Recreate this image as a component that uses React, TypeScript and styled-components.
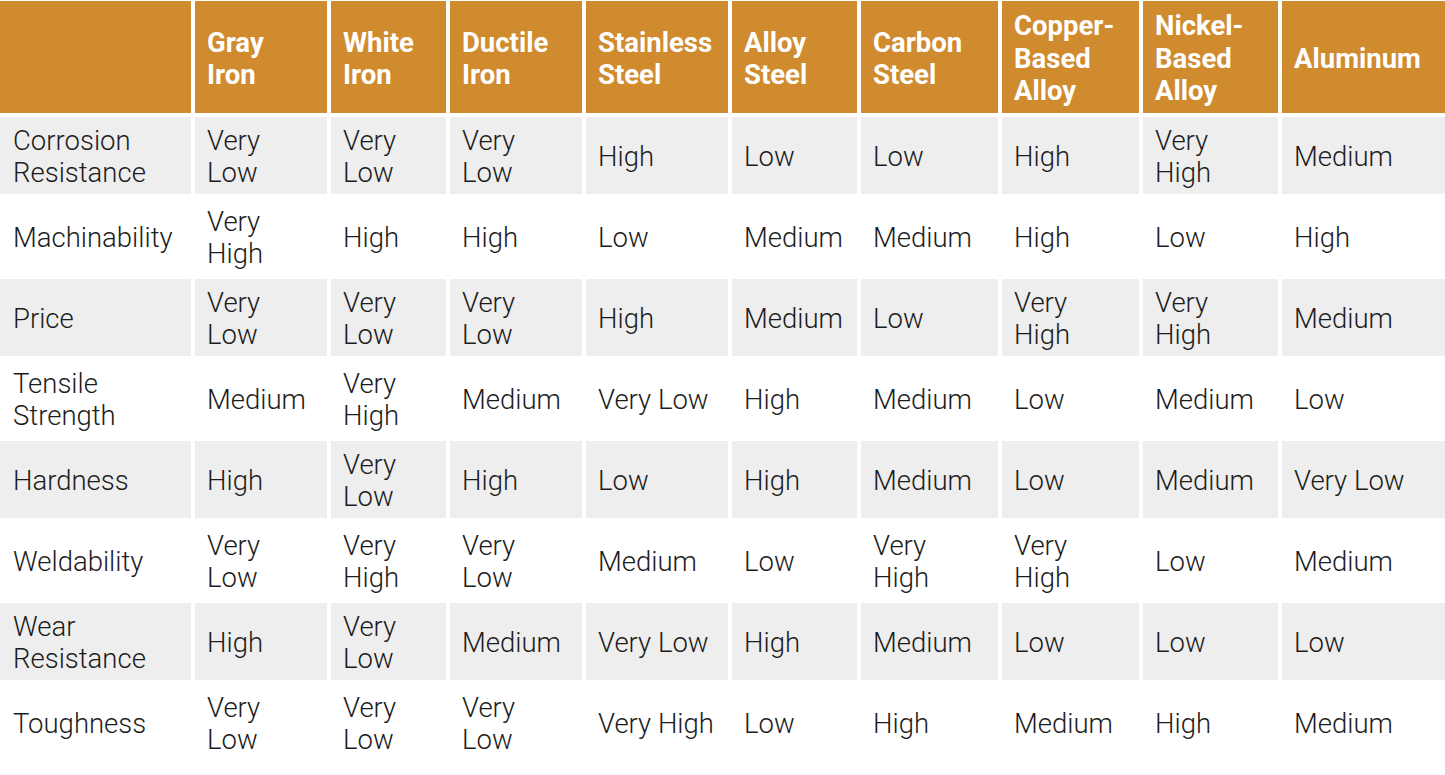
import styled, { createGlobalStyle } from 'styled-components';

const GlobalStyle = createGlobalStyle`
  html, body {
    margin: 0;
    padding: 0;
    background: #fff;
  }
  body {
    font-family: Roboto, "Liberation Sans", sans-serif;
  }
`;

const Grid = styled.div`
  display: grid;
  grid-template-columns: 191px 132px 115px 132px 142px 125px 137px 137px 135px 1fr;
  grid-template-rows: 112px;
  grid-auto-rows: 77px;
  gap: 4px;
  padding-top: 1px;
  width: 1445px;
`;

const HeadCell = styled.div`
  background: #d08b2f;
  color: #fff;
  font-weight: 700;
  font-size: 27.5px;
  line-height: 32.5px;
  padding: 4px 12px 0;
  display: flex;
  align-items: center;
  white-space: pre-line;
`;

const Cell = styled.div<{ $shade: boolean; $label?: boolean }>`
  background: ${props => (props.$shade ? '#eeeeee' : '#ffffff')};
  color: #1c1c1c;
  font-weight: 300;
  font-size: 27.5px;
  line-height: 32.5px;
  padding: 3px 10px 0 ${props => (props.$label ? '13px' : '12px')};
  display: flex;
  align-items: center;
  white-space: pre-line;
`;

const headers = [
  '',
  'Gray\nIron',
  'White\nIron',
  'Ductile\nIron',
  'Stainless\nSteel',
  'Alloy\nSteel',
  'Carbon\nSteel',
  'Copper-\nBased\nAlloy',
  'Nickel-\nBased\nAlloy',
  'Aluminum',
];

const VL = 'Very\nLow';
const VH = 'Very\nHigh';

const rows: string[][] = [
  ['Corrosion\nResistance', VL, VL, VL, 'High', 'Low', 'Low', 'High', VH, 'Medium'],
  ['Machinability', VH, 'High', 'High', 'Low', 'Medium', 'Medium', 'High', 'Low', 'High'],
  ['Price', VL, VL, VL, 'High', 'Medium', 'Low', VH, VH, 'Medium'],
  ['Tensile\nStrength', 'Medium', VH, 'Medium', 'Very Low', 'High', 'Medium', 'Low', 'Medium', 'Low'],
  ['Hardness', 'High', VL, 'High', 'Low', 'High', 'Medium', 'Low', 'Medium', 'Very Low'],
  ['Weldability', VL, VH, VL, 'Medium', 'Low', VH, VH, 'Low', 'Medium'],
  ['Wear\nResistance', 'High', VL, 'Medium', 'Very Low', 'High', 'Medium', 'Low', 'Low', 'Low'],
  ['Toughness', VL, VL, VL, 'Very High', 'Low', 'High', 'Medium', 'High', 'Medium'],
];

const App = () => (
  <>
    <GlobalStyle />
    <Grid>
      {headers.map((h, i) => (
        <HeadCell key={`h${i}`}>{h}</HeadCell>
      ))}
      {rows.map((row, r) =>
        row.map((value, c) => (
          <Cell key={`${r}-${c}`} $shade={r % 2 === 0} $label={c === 0}>
            {value}
          </Cell>
        ))
      )}
    </Grid>
  </>
);

export default App;
